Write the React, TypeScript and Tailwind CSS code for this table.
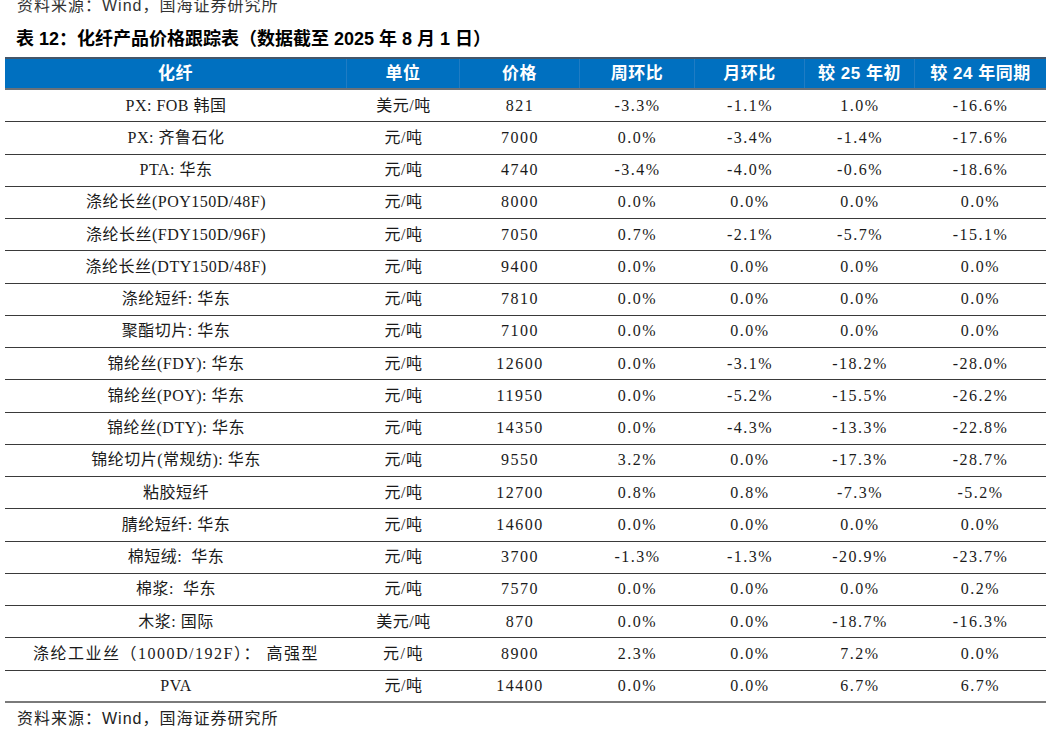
import React from "react";

const rows: string[][] = [
  ["PX: FOB 韩国", "美元/吨", "821", "-3.3%", "-1.1%", "1.0%", "-16.6%"],
  ["PX: 齐鲁石化", "元/吨", "7000", "0.0%", "-3.4%", "-1.4%", "-17.6%"],
  ["PTA: 华东", "元/吨", "4740", "-3.4%", "-4.0%", "-0.6%", "-18.6%"],
  ["涤纶长丝(POY150D/48F)", "元/吨", "8000", "0.0%", "0.0%", "0.0%", "0.0%"],
  ["涤纶长丝(FDY150D/96F)", "元/吨", "7050", "0.7%", "-2.1%", "-5.7%", "-15.1%"],
  ["涤纶长丝(DTY150D/48F)", "元/吨", "9400", "0.0%", "0.0%", "0.0%", "0.0%"],
  ["涤纶短纤: 华东", "元/吨", "7810", "0.0%", "0.0%", "0.0%", "0.0%"],
  ["聚酯切片: 华东", "元/吨", "7100", "0.0%", "0.0%", "0.0%", "0.0%"],
  ["锦纶丝(FDY): 华东", "元/吨", "12600", "0.0%", "-3.1%", "-18.2%", "-28.0%"],
  ["锦纶丝(POY): 华东", "元/吨", "11950", "0.0%", "-5.2%", "-15.5%", "-26.2%"],
  ["锦纶丝(DTY): 华东", "元/吨", "14350", "0.0%", "-4.3%", "-13.3%", "-22.8%"],
  ["锦纶切片(常规纺): 华东", "元/吨", "9550", "3.2%", "0.0%", "-17.3%", "-28.7%"],
  ["粘胶短纤", "元/吨", "12700", "0.8%", "0.8%", "-7.3%", "-5.2%"],
  ["腈纶短纤: 华东", "元/吨", "14600", "0.0%", "0.0%", "0.0%", "0.0%"],
  ["棉短绒:  华东", "元/吨", "3700", "-1.3%", "-1.3%", "-20.9%", "-23.7%"],
  ["棉浆:  华东", "元/吨", "7570", "0.0%", "0.0%", "0.0%", "0.2%"],
  ["木浆: 国际", "美元/吨", "870", "0.0%", "0.0%", "-18.7%", "-16.3%"],
  ["涤纶工业丝（1000D/192F）： 高强型", "元/吨", "8900", "2.3%", "0.0%", "7.2%", "0.0%"],
  ["PVA", "元/吨", "14400", "0.0%", "0.0%", "6.7%", "6.7%"],
];

const headers = ["化纤", "单位", "价格", "周环比", "月环比", "较 25 年初", "较 24 年同期"];

const cols = "grid grid-cols-[342px_113px_120px_115px_110px_110px_131px]";

export default function App() {
  return (
    <div className="w-[1052px] h-[731px] bg-white overflow-hidden text-[#1a1a1a]">
      <div className="pl-[17px] mt-[-3px] h-[17px] leading-[17px] text-[16px] tracking-[1px] text-[#333] font-['Liberation_Sans','Noto_Sans_CJK_SC',sans-serif]">
        资料来源：Wind，国海证券研究所
      </div>
      <div className="pl-[16px] mt-[14px] h-[22px] leading-[22px] text-[18px] font-bold text-black font-['Liberation_Sans','Noto_Sans_CJK_SC',sans-serif]">
        表 12：化纤产品价格跟踪表（数据截至 2025 年 8 月 1 日）
      </div>
      <div className="ml-[5px] mt-[7px] w-[1041px]">
        <div
          className={`${cols} h-[33px] bg-[#0070C0] border-t-2 border-t-[#44566a] border-b-2 border-b-[#6b7178] text-white font-bold text-[17px] tracking-[0.5px] font-['Liberation_Sans','Noto_Sans_CJK_SC',sans-serif]`}
        >
          {headers.map((h, i) => (
            <div
              key={i}
              className={`flex items-center justify-center ${i < 6 ? "border-r border-r-[#1f7cc4]" : ""}`}
            >
              {h}
            </div>
          ))}
        </div>
        {rows.map((r, ri) => (
          <div
            key={ri}
            className={`${cols} h-[32.25px] ${ri === rows.length - 1 ? "border-b-2 border-b-[#7a7a7a]" : "border-b border-b-[#3a3a3a]"} text-[16px] font-['Liberation_Serif','Noto_Sans_CJK_SC',serif]`}
          >
            {r.map((c, ci) => (
              <div
                key={ci}
                className={`flex items-center justify-center whitespace-pre ${ci >= 2 ? "tracking-[1.5px]" : ri === 17 ? "tracking-[1.5px]" : "tracking-[0.5px]"}`}
              >
                {c}
              </div>
            ))}
          </div>
        ))}
      </div>
      <div className="pl-[17px] mt-[6px] h-[20px] leading-[20px] text-[16px] tracking-[1px] text-[#222] font-['Liberation_Sans','Noto_Sans_CJK_SC',sans-serif]">
        资料来源：Wind，国海证券研究所
      </div>
    </div>
  );
}
